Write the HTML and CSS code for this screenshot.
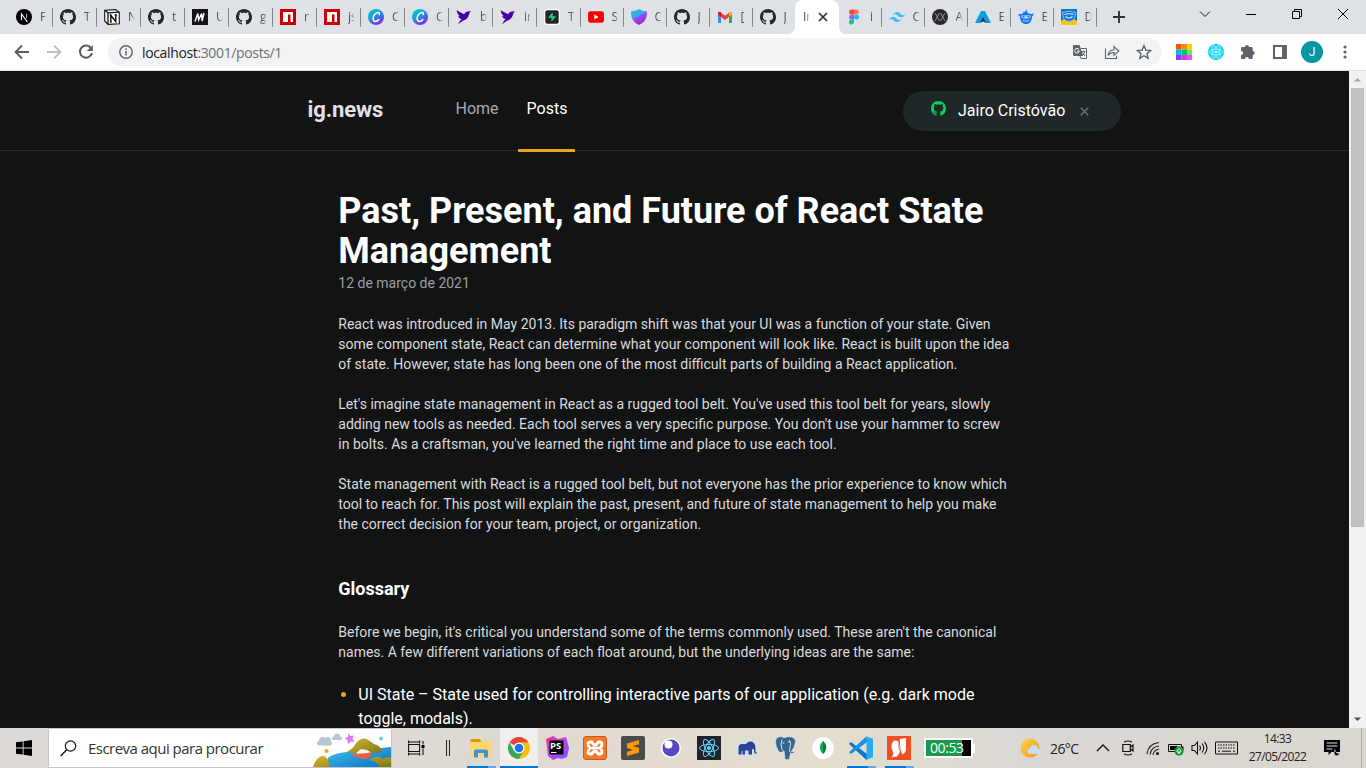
FILE: index.html
```
<!DOCTYPE html>
<html lang="pt-BR">
<head>
<meta charset="utf-8">
<title>ig.news</title>
<link rel="stylesheet" href="styles.css">
</head>
<body>
<svg class="defs" width="0" height="0" aria-hidden="true">
  <defs>
    <linearGradient id="canvaFill" x1="0" y1="0" x2=".6" y2="1"><stop offset="0" stop-color="#00c4cc"/><stop offset=".45" stop-color="#1aa5dc"/><stop offset="1" stop-color="#7d2ae8"/></linearGradient>
    <linearGradient id="shieldFill" x1="0" y1="0" x2=".7" y2="1"><stop offset="0" stop-color="#22e0c4"/><stop offset=".5" stop-color="#8a5cf0"/><stop offset="1" stop-color="#b010d8"/></linearGradient>
    <linearGradient id="stormFill" x1="0" y1="0" x2="1" y2="1"><stop offset="0" stop-color="#ff318c"/><stop offset=".5" stop-color="#b345f1"/><stop offset="1" stop-color="#765af8"/></linearGradient>
    <linearGradient id="seaFill" x1="0" y1="0" x2="1" y2="1"><stop offset="0" stop-color="#43c3e6"/><stop offset="1" stop-color="#0b6fc4"/></linearGradient>
    <linearGradient id="hillFill" x1="0" y1="0" x2="1" y2="1"><stop offset="0" stop-color="#d9b62c"/><stop offset="1" stop-color="#7b7a1c"/></linearGradient>
    <linearGradient id="sunFill" x1="0" y1="0" x2="1" y2="1"><stop offset="0" stop-color="#ffd84a"/><stop offset="1" stop-color="#f78f1e"/></linearGradient>
  </defs>
  <symbol id="github" viewBox="0 0 16 16"><path d="M8 0C3.58 0 0 3.58 0 8c0 3.54 2.29 6.53 5.47 7.59.4.07.55-.17.55-.38 0-.19-.01-.82-.01-1.49-2.01.37-2.53-.49-2.69-.94-.09-.23-.48-.94-.82-1.13-.28-.15-.68-.52-.01-.53.63-.01 1.08.58 1.23.82.72 1.21 1.87.87 2.33.66.07-.52.28-.87.51-1.07-1.78-.2-3.64-.89-3.64-3.95 0-.87.31-1.59.82-2.15-.08-.2-.36-1.02.08-2.12 0 0 .67-.21 2.2.82.64-.18 1.32-.27 2-.27s1.36.09 2 .27c1.53-1.04 2.2-.82 2.2-.82.44 1.1.16 1.92.08 2.12.51.56.82 1.27.82 2.15 0 3.07-1.87 3.75-3.65 3.95.29.25.54.73.54 1.48 0 1.07-.01 1.93-.01 2.2 0 .21.15.46.55.38A8.01 8.01 0 0016 8c0-4.42-3.58-8-8-8z"/></symbol>
  <symbol id="npm" viewBox="0 0 16 16"><path fill="#cb0000" d="M0 0h16v16H0z"/><path fill="#fff" d="M3 3h10v10h-2.500V5.500H8V13H3z"/></symbol>
  <symbol id="canva" viewBox="0 0 16 16"><circle cx="8" cy="8" r="8" fill="url(#canvaFill)"/><path d="M11.300 5.500c.3-1.800-1-2.300-2.100-1.900C6.500 4.600 4.800 7.700 5.100 10c.4 3.300 3.800 3.100 5.700.5" fill="none" stroke="#fff" stroke-width="1.500" stroke-linecap="round"/></symbol>
  <symbol id="bird" viewBox="0 0 16 16"><path fill="#4200a8" d="M.8 1c1.800 2.200 5 2.500 7.400 4.300C8.900 3 11 2 15 2.300c-1.300.8-1.600 2-2 3.300-.8 3.400-2.800 5.300-5.700 6L2 15.200l2.600-4.100 1.500-.8C3.700 9.800 2.400 8.300 2.200 7l1.600.2C2 5.600.7 3.700.8 1z"/></symbol>
</svg>

<div class="tabstrip">
  <div class="tab"><svg class="fav" viewBox="0 0 16 16"><circle cx="8" cy="8" r="8"/><path d="M5.500 11.300V5l6 8" fill="none" stroke="#fff" stroke-width="1.200"/><path d="M10.600 4.700v4.500" stroke="#bbb"/></svg><span>F</span></div>
  <div class="tab"><svg class="fav gh"><use href="#github"/></svg><span>T</span></div>
  <div class="tab"><svg class="fav" viewBox="0 0 16 16"><path fill="#fff" stroke="#111" stroke-width="1.100" d="M.7 1.200l10.800-.6 3.800 2.600v11.600L4 15.400.7 12z"/><path d="M1 1.300l3 2.500v11.300M4 3.800l11-.6" fill="none" stroke="#111" stroke-width="1.300"/><path d="M6.800 12.500v-6l5 6v-6.500M5.800 6.300h2M10.700 6h2.200M5.900 12.700h1.900" fill="none" stroke="#111" stroke-width="1.400"/></svg><span>N</span></div>
  <div class="tab"><svg class="fav gh"><use href="#github"/></svg><span>t</span></div>
  <div class="tab"><svg class="fav" viewBox="0 0 16 16"><path fill="#15141a" d="M0 0h16v16H0z"/><path d="M3 12.500L5.800 4.500 6.600 11l3-6.500.5 7.500 1.900-8" fill="none" stroke="#fff" stroke-width="1.400"/></svg><span>U</span></div>
  <div class="tab"><svg class="fav gh"><use href="#github"/></svg><span>g</span></div>
  <div class="tab"><svg class="fav"><use href="#npm"/></svg><span>r</span></div>
  <div class="tab"><svg class="fav"><use href="#npm"/></svg><span>js</span></div>
  <div class="tab"><svg class="fav"><use href="#canva"/></svg><span>C</span></div>
  <div class="tab"><svg class="fav"><use href="#canva"/></svg><span>C</span></div>
  <div class="tab"><svg class="fav"><use href="#bird"/></svg><span>b</span></div>
  <div class="tab"><svg class="fav"><use href="#bird"/></svg><span>in</span></div>
  <div class="tab"><svg class="fav" viewBox="0 0 16 16"><rect width="16" height="16" rx="3.500" fill="#fff"/><rect x="1.300" y="1.300" width="13.400" height="13.400" rx="2" fill="#25262b"/><path fill="#24c984" d="M8.700 3.300L3.900 8.800h3.500v3.900l4.800-5.500H8.700z"/></svg><span>T</span></div>
  <div class="tab late"><svg class="fav" viewBox="0 0 16 16"><rect y="2.300" width="16" height="11.400" rx="2.600" fill="#f00"/><path fill="#fff" d="M6.300 5.600v4.800L10.600 8z"/></svg><span>S</span></div>
  <div class="tab late"><svg class="fav" viewBox="0 0 16 16"><path fill="url(#shieldFill)" d="M0 2.500Q5 2 8 .200q3 1.800 8 2.300c0 7-2.500 11-8 13.500C2.500 13.500 0 9.500 0 2.500z"/><path fill="#1fbfe6" d="M0 2.500Q5 2 8 .200q3 1.800 8 2.300L1.800 10Q0 7 0 2.500z" opacity=".75"/></svg><span>C</span></div>
  <div class="tab late"><svg class="fav gh"><use href="#github"/></svg><span>J</span></div>
  <div class="tab late"><svg class="fav" viewBox="0 0 16 16"><path fill="#4285f4" d="M1 3.500h3V14H2q-1 0-1-1z"/><path fill="#34a853" d="M12 3.500h3V13q0 1-1 1h-2z"/><path fill="#ea4335" d="M3 3l5 3.800L13 3v4.200L8 11 3 7.200z"/><path fill="#c5221f" d="M1 4q.3-2 3-1v4.800L1 5.500z"/><path fill="#fbbc04" d="M15 4q-.3-2-3-1v4.800l3-2.300z"/></svg><span>[</span></div>
  <div class="tab late nosep"><svg class="fav gh"><use href="#github"/></svg><span>J</span></div>
  <div class="tab active"><span>Ir</span><svg class="close" viewBox="0 0 10 10"><path d="M1 1l8 8M9 1L1 9" stroke="#303236" stroke-width="1.700"/></svg></div>
  <div class="tab figma"><svg class="fav" viewBox="0 0 16 16"><path fill="#f24e1e" d="M8 .5H5.600a2.500 2.500 0 000 5H8z"/><path fill="#ff7262" d="M8 .5h2.400a2.500 2.500 0 010 5H8z"/><path fill="#a259ff" d="M8 5.500H5.600a2.500 2.500 0 000 5H8z"/><circle cx="10.500" cy="8" r="2.500" fill="#1abcfe"/><path fill="#0acf83" d="M5.600 10.500H8V13a2.500 2.500 0 11-2.400-2.500z"/></svg><span>i</span></div>
  <div class="tab late"><svg class="fav" viewBox="0 0 16 16"><path fill="#38bdf8" d="M4 6.500C4.500 4.400 5.900 3.300 8 3.300c3.200 0 3.600 2.400 5.200 2.800 1.100.3 2-.1 2.800-1.200-.5 2.100-1.900 3.200-4 3.200-3.200 0-3.600-2.400-5.200-2.800-1.100-.3-2 .1-2.800 1.200zM0 11.300c.5-2.100 1.900-3.200 4-3.200 3.200 0 3.600 2.400 5.200 2.800 1.100.3 2-.1 2.800-1.200-.5 2.100-1.900 3.200-4 3.200-3.200 0-3.600-2.400-5.200-2.800-1.100-.3-2 .1-2.800 1.200z"/></svg><span>C</span></div>
  <div class="tab late"><svg class="fav" viewBox="0 0 16 16"><circle cx="8" cy="8" r="8" fill="#292929"/><path d="M3 4l4.500 8M7.500 4L3 12M8.500 4l4.500 8M13 4l-4.500 8" stroke="#999" stroke-width=".9"/></svg><span>A</span></div>
  <div class="tab late"><svg class="fav" viewBox="0 0 16 16"><path fill="#0b9fe0" d="M6 2h4l6 12h-5L8 7.500 5 14H0z"/><path fill="#123a58" d="M8 7.500L11.200 14 8 12.500 4.800 14z"/></svg><span>E</span></div>
  <div class="tab late"><svg class="fav" viewBox="0 0 16 16"><path fill="#1a73e8" d="M2.500 5.200l3-1.200-.5-1.500 2 .5L8.500.5 9.500 4l4 1.200L15.500 4 15 7l-1 .5c0 5-2.500 7.500-6 7.500s-6-2.500-6-7.500L.5 6.500l0-1.500z"/><path fill="#a9d4ff" d="M3.500 6.300h9v2.500q-4.500 2-9 0z"/><path stroke="#1a73e8" stroke-width="1.800" d="M5.600 6.800v1.700M10.500 6.800v1.700"/><path d="M5 11.500q3 1.500 6 0" fill="none" stroke="#a9d4ff"/></svg><span>E</span></div>
  <div class="tab late"><svg class="fav" viewBox="0 0 16 16"><path fill="#1273d4" d="M0 0h16v12H0z"/><path fill="#fcc609" d="M0 12l3-2h10l3 2v4H0z"/><path fill="#1273d4" stroke="#86cfff" stroke-width=".9" d="M1.500 3.500Q8 1 14.500 3.500L13.500 9Q12 12.500 8 12.500T2.500 9z"/><path d="M3.500 5.500Q8 4 12.500 5.500M4.500 7.500q3.500 3 7 0" fill="none" stroke="#d6efff" stroke-width="1.200"/></svg><span>D</span></div>
  <svg class="plus" viewBox="0 0 12 12"><path d="M6 0v12M0 6h12" stroke="#303236" stroke-width="1.900"/></svg>
  <div class="winctl">
    <svg viewBox="0 0 12 12"><path d="M1 3.500l5 5 5-5" fill="none" stroke="#111"/></svg>
    <svg viewBox="0 0 12 12"><path d="M1 6.500h10" stroke="#000"/></svg>
    <svg viewBox="0 0 12 12"><path d="M1.500 3.500h7v7h-7zM3.500 3.500v-2h7v7h-2" fill="none" stroke="#000"/></svg>
    <svg viewBox="0 0 12 12"><path d="M1 1l10 10M11 1L1 11" stroke="#000"/></svg>
  </div>
</div>

<div class="toolbar">
  <svg class="nav" viewBox="0 0 16 16"><path d="M15 8H2M8 1.500L1.600 8 8 14.500" fill="none" stroke="#5a5d61" stroke-width="1.900"/></svg>
  <svg class="nav" viewBox="0 0 16 16"><path d="M1 8h13M8 1.500L14.400 8 8 14.500" fill="none" stroke="#bdc0c3" stroke-width="1.900"/></svg>
  <svg class="nav" viewBox="0 0 16 16"><path d="M13.200 4.300A6.100 6.100 0 1014 9" fill="none" stroke="#5a5d61" stroke-width="2"/><path fill="#5a5d61" d="M14.800 1v6H8.800z"/></svg>
  <div class="omnibox">
    <svg class="info" viewBox="0 0 14 14"><circle cx="7" cy="7" r="6.200" fill="none" stroke="#5f6368" stroke-width="1.400"/><path d="M7 6v4.500M7 3.300v1.600" stroke="#5f6368" stroke-width="1.500"/></svg>
    <span class="url"><b>localhost</b>:3001/posts/1</span>
    <svg class="act" viewBox="0 0 16 16"><path fill="#5f6368" d="M1.500 1h6l1.300 3.500L11 12H2.500Q1 12 1 10.500v-8Q1 1 1.500 1z"/><path d="M9 4.500h5.500v10H9L8 12" fill="none" stroke="#5f6368"/><path d="M9.500 7.500h4M11.500 6.500v1M12.700 7.500Q12 10.500 10.500 11.500M10.500 8.500l2.500 3.500" fill="none" stroke="#5f6368" stroke-width=".9"/><path d="M6.800 5.300a2.300 2.300 0 10.500 1.700H5" fill="none" stroke="#fff"/></svg>
    <svg class="act" viewBox="0 0 16 16"><path d="M1.500 4.500v10h11v-3M4 11.500Q4.500 6 10 5.800V2.500L14.800 7 10 11.300V8.500Q6 8.400 4 11.500z" fill="none" stroke="#5f6368" stroke-width="1.100"/></svg>
    <svg class="act" viewBox="0 0 16 16"><path d="M8 1.800l1.900 4.300 4.700.4-3.600 3.100 1.100 4.600L8 11.700l-4.100 2.500L5 9.600 1.400 6.500l4.700-.4z" fill="none" stroke="#5f6368" stroke-width="1.400"/></svg>
  </div>
  <svg class="ext" viewBox="0 0 16 16"><path fill="#ff5200" d="M0 0h5.500v5.500H0z"/><path fill="#ff8c00" d="M5.500 0H11v5.500H5.500z"/><path fill="#fc0" d="M11 0h5v5.500h-5z"/><path fill="#00b7f4" d="M0 5.500h5.500V11H0z"/><path fill="#00c257" d="M5.500 5.500H11V11H5.500z"/><path fill="#7be04c" d="M11 5.500h5V11h-5z"/><path fill="#8b3dff" d="M0 11h5.500v5H0z"/><path fill="#c43dff" d="M5.500 11H11v5H5.500z"/><path fill="#ff42f2" d="M11 11h5v5h-5z"/></svg>
  <svg class="ext" viewBox="0 0 16 16"><circle cx="8" cy="8" r="8" fill="#12d3f3"/><g fill="none" stroke="#b2f3ff" stroke-width=".8"><ellipse cx="8" cy="8" rx="6.500" ry="2.800"/><ellipse cx="8" cy="8" rx="6.500" ry="2.800" transform="rotate(60 8 8)"/><ellipse cx="8" cy="8" rx="6.500" ry="2.800" transform="rotate(120 8 8)"/></g><circle cx="8" cy="8" r="1.300" fill="#fff"/></svg>
  <svg class="ext" viewBox="0 0 16 16"><path fill="#5f6368" d="M1 4.200q0-1.200 1.200-1.200H5a2 2 0 014 0h2.500q1.200 0 1.200 1.200V7a2 2 0 010 4v3q0 1-1.200 1H9a2.100 2.100 0 00-4.200 0H2.200Q1 15 1 14v-2.800a2.100 2.100 0 000-4.200z"/></svg>
  <svg class="ext" viewBox="0 0 16 16"><path fill="#5f6368" fill-rule="evenodd" d="M1 1h14v14H1zM3 3v10h7V3z"/></svg>
  <div class="avatar">J</div>
  <svg class="dots" viewBox="0 0 4 14"><g fill="#5f6368"><circle cx="2" cy="2" r="1.600"/><circle cx="2" cy="7" r="1.600"/><circle cx="2" cy="12" r="1.600"/></g></svg>
</div>

<div class="viewport">
  <div class="page">
    <header class="site-header">
      <strong class="logo">ig.news</strong>
      <nav class="site-nav"><a>Home</a><a class="current">Posts</a></nav>
      <button class="user"><svg class="user-icon"><use href="#github"/></svg><span>Jairo Cristóvão</span><svg class="user-x" viewBox="0 0 10 10"><path d="M.8.8l8.400 8.400M9.200.8L.8 9.200" stroke="#737380" stroke-width="1.500"/></svg></button>
    </header>
    <article class="post">
      <h1>Past, Present, and Future of React State<br>Management</h1>
      <time>12 de março de 2021</time>
      <p>React was introduced in May 2013. Its paradigm shift was that your UI was a function of your state. Given<br>some component state, React can determine what your component will look like. React is built upon the idea<br>of state. However, state has long been one of the most difficult parts of building a React application.</p>
      <p>Let's imagine state management in React as a rugged tool belt. You've used this tool belt for years, slowly<br>adding new tools as needed. Each tool serves a very specific purpose. You don't use your hammer to screw<br>in bolts. As a craftsman, you've learned the right time and place to use each tool.</p>
      <p>State management with React is a rugged tool belt, but not everyone has the prior experience to know which<br>tool to reach for. This post will explain the past, present, and future of state management to help you make<br>the correct decision for your team, project, or organization.</p>
      <h3>Glossary</h3>
      <p>Before we begin, it's critical you understand some of the terms commonly used. These aren't the canonical<br>names. A few different variations of each float around, but the underlying ideas are the same:</p>
      <ul><li>UI State – State used for controlling interactive parts of our application (e.g. dark mode<br>toggle, modals).</li></ul>
    </article>
  </div>
  <div class="scrollbar"><svg viewBox="0 0 17 17"><path fill="#a3a3a3" d="M5 10.500h7L8.500 7z"/></svg><div class="thumb"></div><svg viewBox="0 0 17 17"><path fill="#505050" d="M5 6.500h7L8.500 10z"/></svg></div>
</div>

<div class="taskbar">
  <div class="start"><svg viewBox="0 0 16 16"><path d="M0 2.300l6.700-.9v6.200H0zM7.600 1.200L16 0v7.600H7.600zM0 8.400h6.700v6.200L0 13.700zM7.600 8.400H16V16l-8.400-1.200z"/></svg></div>
  <div class="search">
    <svg class="glass" viewBox="0 0 17 17"><circle cx="10.500" cy="6" r="5.200" fill="none" stroke="#111" stroke-width="1.200"/><path d="M6.700 9.700L.7 16" stroke="#111" stroke-width="1.300"/></svg>
    <span>Escreva aqui para procurar</span>
    <svg class="scene" viewBox="0 0 78 38">
      <g fill="#b5c6d4"><circle cx="10" cy="12" r="4"/><circle cx="14.500" cy="11.500" r="3.500"/><rect x="4" y="12" width="15" height="4.500" rx="2.250"/><circle cx="24" cy="7.500" r="3"/><rect x="19" y="7.500" width="10" height="3.500" rx="1.700"/></g>
      <path fill="#e477f5" d="M35.500 4l2 3 3.500-.5-1.500 3.300 2 3.200-3.500-.5-3 2.500-.5-4-3-1.500 3.500-1.700z"/>
      <circle cx="68" cy="9.500" r="2" fill="#69cfe8"/><circle cx="13.500" cy="22" r="2" fill="#f6a81c"/>
      <path fill="url(#seaFill)" d="M14 38q-1-8 2-10 6-4 18-5 10-3 25-3l19-2v20z"/>
      <path fill="url(#hillFill)" d="M34 23q7-4 9-9 7-8 14-2 3 3 7 4 5 3 5 7-12 2-35 0z"/>
      <path fill="url(#hillFill)" d="M0 38Q4 26 11 27q4 1 6 11zM56 31q8-6 14-1 5-3 8-1v9H66q-2-6-10-7z"/>
      <path fill="#f2f4f5" d="M43 24l5-4 6 1 5 3-14 2z"/><path fill="#ef6042" d="M38 24q9 2 21-1-2 6-6 7l-7-1q-5-1-8-5z"/>
    </svg>
  </div>
  <div class="apps">
    <div class="app view"><svg viewBox="0 0 18 18"><path d="M.6 4.500V1.500M.6 5.500h11v7H.6zM.6 16.500v-3M11.600 1.500v3M11.600 13.500v3M.6 3h11M.6 15h11M15 2v3.500M15 9.500V16" fill="none" stroke="#111" stroke-width="1.100"/><path d="M13.500 6h3v3h-3z"/></svg></div>
    <div class="bars"></div>
    <div class="app run"><svg viewBox="0 0 24 24"><path fill="#d79a08" d="M1.500 3h9l2 2.500H22V9H1.500z"/><path fill="#ffd76a" d="M1.500 6h9.500l2-1h9.500v15.500h-21z"/><path fill="#3a95d6" d="M5 21.500v-6q0-2 2-2h10q2 0 2 2v6h-4v-4.500H9v4.500z"/></svg></div>
    <div class="app open"><svg viewBox="0 0 24 24"><path fill="#ea4335" d="M12 12L2.500 6.500A11 11 0 0121.500 6.500L12 7z"/><path fill="#fbbc04" d="M12 6.600h9.600A11 11 0 0112 23z"/><path fill="#34a853" d="M2.400 6.500A11 11 0 0011.800 23L16.700 14.700 7.300 14.900z"/><circle cx="12" cy="12" r="5.500" fill="#fff"/><circle cx="12" cy="12" r="4.300" fill="#1a73e8"/></svg></div>
    <div class="app"><svg viewBox="0 0 24 24"><path fill="url(#stormFill)" d="M1 3l7-3 5 3 8-2 3 11-2 9-5 2-4-1-5 2-5-4z"/><path d="M4.500 4.500h14v14h-14z"/><path stroke="#fff" d="M6 16.500h5.500"/><text x="5" y="13.200" class="ps">PS</text></svg></div>
    <div class="app"><svg viewBox="0 0 24 24"><rect x=".5" y=".5" width="23" height="23" rx="2.500" fill="#f47b29" stroke="#c85b16"/><path d="M7.500 6h1.300q1.200 2.800 3.200 2.800T15.200 6h1.300q2.500 0 2.500 2.200 0 1.800-2 3.800 2 2 2 3.800 0 2.200-2.500 2.200h-1.300q-1.200-2.800-3.200-2.800T8.800 18H7.500Q5 18 5 15.800 5 14 7 12 5 10 5 8.200 5 6 7.500 6zM8.500 12h7" fill="none" stroke="#fff" stroke-width="2.900" stroke-linejoin="round"/></svg></div>
    <div class="app"><svg viewBox="0 0 24 24"><rect width="24" height="24" rx="2" fill="#4b4b4b"/><path fill="#ff9800" d="M6 7.500L18 4v4.300L11.500 10l6.500 2v4.500L6 20v-4.300l6-1.800-6-2z"/></svg></div>
    <div class="app"><svg viewBox="0 0 24 24"><circle cx="12" cy="12" r="10" fill="#fff"/><circle cx="12" cy="12" r="8.500" fill="#5849be"/><circle cx="9.500" cy="8.500" r="4" fill="#fff"/></svg></div>
    <div class="app"><svg viewBox="0 0 24 24"><path fill="#20232a" d="M0 0h24v24H0z"/><g fill="none" stroke="#61dafb" stroke-width="1"><ellipse cx="12" cy="12" rx="9.500" ry="3.600"/><ellipse cx="12" cy="12" rx="9.500" ry="3.600" transform="rotate(60 12 12)"/><ellipse cx="12" cy="12" rx="9.500" ry="3.600" transform="rotate(120 12 12)"/></g><circle cx="12" cy="12" r="2" fill="#61dafb"/></svg></div>
    <div class="app"><svg viewBox="0 0 24 24"><circle cx="12" cy="12" r="10.500" fill="#dedede"/><path fill="#28439b" d="M3.500 18.500V12q0-4 3.500-4h4q1.500-3 5-2.500 4 .5 4.500 6.500v4q0 1 1 0l.5 1q-3 2-3-2v-2l-2 .5v5h-3.500v-4H10v4H7.500v-4l-1 1v3z"/></svg></div>
    <div class="app"><svg viewBox="0 0 24 24"><path fill="#336791" stroke="#dfe6ea" stroke-width=".7" d="M5 1q4-1 6 .7Q15 0 19 1q4 1.500 3.500 5-1 6-4 9.500l4 .2q-1 2-5 1.800l-1 5q-1 1.700-4.500 1l-.8-8-2 .5Q6 18 3.500 11 1 3 5 1z"/><path d="M9 3.500q-2 4 0 10l2 2M16.500 4q2 4 .5 7l-.5 4 1 1.500M9.500 7h2M15 6h2" fill="none" stroke="#fff" stroke-width=".8"/></svg></div>
    <div class="app"><svg viewBox="0 0 24 24"><circle cx="12" cy="12" r="10.800" fill="#fff"/><path fill="#13aa52" d="M12 5q4 4 3 8-.7 3-3 5-2.300-2-3-5-1-4 3-8z"/><path fill="#0c7c3b" d="M12 5q4 4 3 8-.7 3-3 5z"/></svg></div>
    <div class="app run"><svg viewBox="0 0 24 24"><path fill="#0879c9" d="M0 7.700L2 6l16 12v5.500l-.8.200L1 9z"/><path fill="#1591df" d="M0 16.300L17.500.3 18 6 2 18z"/><path fill="#2aaaf2" d="M17.500.2L24 3v18l-6.500 3z"/></svg></div>
    <div class="app run"><svg viewBox="0 0 24 24"><path fill="#f04e23" d="M0 0h24v24H0z"/><path fill="#fff" d="M12.500 3l6.500-1v11q0 4-4 5.500l-1.500-6zM7 4.500l4.500.5 2 8.500q-.5 4-3.500 7l-5.500 1q3-4 1-6.500-2.500-7 1.500-10.500z"/><path d="M12 3.500v8l2.500 6.500" fill="none" stroke="#f04e23" stroke-width="1"/></svg></div>
  </div>
  <div class="timer"><span>00:53</span></div>
  <svg class="weather" viewBox="0 0 22 22"><circle cx="10" cy="11" r="9.500" fill="url(#sunFill)"/><g fill="#bfe2f7"><circle cx="14" cy="12" r="4"/><rect x="7.500" y="11.500" width="13" height="5.500" rx="2.750"/></g></svg>
  <span class="temp">26°C</span>
  <div class="tray">
    <svg class="caret" viewBox="0 0 14 16"><path d="M1 11l6-6 6 6" fill="none" stroke="#111" stroke-width="1.300"/></svg>
    <svg class="cam" viewBox="0 0 12 16"><path d="M.8 4.500h7.500v7H.8zM8.500 7L11 5v6L8.500 9M2 2q4-2 8 0M2 14q4 2 8 0" fill="none" stroke="#111" stroke-width="1.200"/></svg>
    <svg class="wifi" viewBox="0 0 14 16"><path d="M1 14Q2 4 13 2.500M4 14.500Q5 7 13 6M7 14.800Q8 10 13 9" fill="none" stroke="#222" stroke-width="1.200"/><circle cx="11.500" cy="13.500" r="1.500"/></svg>
    <svg class="batt" viewBox="0 0 16 16"><path d="M.5 4.500h13v7H.5z" fill="none" stroke="#111"/><path d="M2 6h7v4H2zM14 6.500h1.500V10H14z"/><circle cx="11" cy="11" r="4.700" fill="#159b32"/><path d="M11 14v-3m0-2.500q4 3 0 4.500-4-1.500 0-4.500" fill="none" stroke="#fff"/></svg>
    <svg class="vol" viewBox="0 0 17 16"><path d="M1 5.500h2.500L6.500 2v12L3.500 10.500H1zM8.500 5.500q2 2.500 0 5M11 3.500q3.500 4.500 0 9M13.500 1.800q5 6.200 0 12.400" fill="none" stroke="#111" stroke-width="1.100"/></svg>
    <svg class="kbd" viewBox="0 0 23 16"><path d="M.5 2h22v12H.5z" fill="none" stroke="#111"/><path d="M3 5h17.500M3 8h17.500" stroke="#111" stroke-width="1.200" stroke-dasharray="1.500 1"/><path d="M3 11.200h2M7 11.200h9M18 11.200h2" stroke="#111"/></svg>
  </div>
  <div class="clock"><span>14:33</span><span>27/05/2022</span></div>
  <svg class="note" viewBox="0 0 17 18"><path d="M0 1h16v12H7.500L4.500 16v-3H0z"/><path d="M2.500 4h11M2.500 7h11M2.500 10h6" stroke="#ddd" stroke-width="1.100"/><path d="M11 16.500q-2-3 0-6 0 4 5 4-2 3-5 2z" stroke="#ddd" stroke-width=".6"/></svg>
  <div class="peek"></div>
</div>
</body>
</html>
```

FILE: styles.css
```
* { box-sizing: border-box; }
body { margin: 0; width: 1366px; height: 768px; overflow: hidden; display: flex; flex-direction: column; font-family: "Open Sans", sans-serif; }
svg { display: block; flex: none; }
.defs { position: absolute; }

.tabstrip { height: 34px; flex: none; background: #dee1e6; display: flex; padding-left: 8px; }
.tab { width: 44px; height: 34px; flex: none; display: flex; align-items: center; padding-left: 8px; position: relative; font-size: 12px; color: #50545a; }
.tab::after { content: ""; position: absolute; right: -1px; top: 8px; width: 1px; height: 19px; background: #83868b; }
.tab span { margin-left: 8px; width: 10px; white-space: nowrap; line-height: 18px; -webkit-mask-image: linear-gradient(90deg, #000 3px, transparent 7px); mask-image: linear-gradient(90deg, #000 3px, transparent 7px); }
.tab.late { width: 43px; padding-left: 7.500px; }
.tab.figma { width: 42px; padding-left: 7px; }
.tab.nosep::after, .tab.active::after { display: none; }
.fav { width: 16px; height: 16px; }
.gh { fill: #24292f; }
.tab.active { width: 44px; background: #fff; border-radius: 8px 8px 0 0; padding-left: 8px; }
.tab.active::before { content: ""; position: absolute; left: -8px; right: -8px; bottom: 0; height: 8px; background: radial-gradient(circle at 0 0, transparent 8px, #fff 8.500px) left / 8px 8px no-repeat, radial-gradient(circle at 100% 0, transparent 8px, #fff 8.500px) right / 8px 8px no-repeat; }
.tab.active span { margin: 0; width: 9px; color: #45494d; }
.close { width: 10px; height: 10px; margin-left: 6px; }
.plus { width: 12px; height: 12px; margin: 11px 0 0 17px; }
.winctl { margin-left: auto; display: flex; gap: 34px; padding: 8px 17px 0 0; }
.winctl svg { width: 12px; height: 12px; }

.toolbar { height: 37px; flex: none; background: #fff; border-bottom: 1px solid #dcdee0; display: flex; align-items: center; padding-left: 14px; }
.nav { width: 16px; height: 16px; margin-right: 16px; }
.nav:nth-of-type(3) { margin-right: 14px; }
.omnibox { width: 1054px; height: 28px; border-radius: 14px; background: #f1f3f4; display: flex; align-items: center; padding: 0 10px 0 11px; }
.info { width: 14px; height: 14px; }
.url { margin-left: 9px; font-size: 14px; letter-spacing: -.36px; color: #6c7074; margin-right: auto; }
.url b { font-weight: 400; color: #202124; }
.act { width: 16px; height: 16px; margin-left: 16px; }
.ext { width: 16px; height: 16px; margin-left: 16px; }
.omnibox + .ext { margin-left: 14px; }
.avatar { width: 22px; height: 22px; border-radius: 50%; margin-left: 13px; background: #0097a7; color: #fff; font: 12px Roboto, sans-serif; display: flex; align-items: center; justify-content: center; }
.dots { width: 4px; height: 14px; margin-left: 19.500px; }

.viewport { height: 657px; flex: none; display: flex; }
.page { width: 1349px; background: #121414; font-family: Roboto, sans-serif; overflow: hidden; }
.scrollbar { width: 17px; background: #f1f1f1; display: flex; flex-direction: column; align-items: center; }
.scrollbar svg { width: 17px; height: 17px; }
.thumb { width: 13px; height: 439px; background: #c1c1c1; margin-bottom: auto; }

.site-header { height: 80px; border-bottom: 1px solid #2a2d2e; display: flex; align-items: flex-start; padding: 20px 228px 0 307.500px; }
.logo { font-size: 22px; line-height: 26px; letter-spacing: -.1px; margin-top: 6px; width: 148px; color: #e1e1e6; }
.site-nav { display: flex; gap: 28px; font-size: 16px; line-height: 20px; color: #a8a8b3; margin-top: 8px; }
.current { color: #fff; position: relative; }
.current::after { content: ""; position: absolute; left: -8.500px; width: 57px; top: 50px; height: 3px; background: #eba417; border-radius: 1px 1px 0 0; }
.user { margin-left: auto; width: 218px; height: 40px; border: 0; border-radius: 20px; background: #1f2729; color: #fff; font: 400 16px/20px Roboto, sans-serif; display: flex; align-items: center; padding: 0 0 0 28px; }
.user-icon { width: 15px; height: 15px; fill: #04d361; margin: 0 12px 5px 0; }
.user-x { width: 9px; height: 9px; margin-left: 14.500px; }

.post { width: 672px; margin: 40px 0 0 338.300px; color: #dadade; white-space: nowrap; }
.post h1 { margin: 0; font-size: 36px; line-height: 40px; color: #fff; }
.post time { display: block; font-size: 14px; line-height: 20px; margin: 2px 0 21px; color: #9b9ea5; }
.post p { margin: 0 0 20px; font-size: 14px; line-height: 20px; }
.post h3 { margin: 42px 0 20px; font-size: 18px; line-height: 26px; color: #fff; }
.post ul { margin: 21px 0 0; padding-left: 20px; font-size: 16px; line-height: 24px; color: #fff; list-style: none; }
.post li { position: relative; }
.post li::before { content: ""; position: absolute; left: -17px; top: 9px; width: 5px; height: 5px; border-radius: 50%; background: #eba417; }

.taskbar { height: 40px; flex: none; display: flex; align-items: center; background: linear-gradient(90deg, #ded9d5 0, #dfd9d3 35%, #e4ddcf 62%, #dad8d4 75%, #dad6cf 100%); color: #222; }
.start { width: 48px; flex: none; padding-left: 16px; }
.start svg { width: 16px; height: 16px; }
.search { width: 344px; flex: none; height: 40px; background: #fff; border: 1px solid #c6c6c6; display: flex; align-items: center; padding-left: 11px; font-size: 15px; color: #333; }
.search span { letter-spacing: -.52px; margin: 0 auto 0 11px; white-space: nowrap; }
.glass { width: 17px; height: 17px; }
.scene { width: 78px; height: 38px; }
.apps { display: flex; }
.app { width: 38px; height: 40px; padding: 8px 7px; position: relative; }
.app svg { width: 24px; height: 24px; }
.app.view { width: 50px; padding: 11px 0 0 16px; }
.app.view svg { width: 18px; height: 18px; }
.bars { width: 4px; height: 16px; border: solid #222; border-width: 0 1px; margin: 12px 12px 0 4px; }
.app.open { background: #f1efee; border-bottom: 2px solid #0078d7; }
.app.run::after { content: ""; position: absolute; left: 5px; bottom: 0; width: 29px; height: 2px; background: linear-gradient(90deg, #0078d7 21px, #64a9e2 21px); }
.ps { font: 700 9.500px "Open Sans", sans-serif; fill: #fff; }
.timer { width: 49px; height: 20px; margin-left: 6px; border: 2px solid #fff; background: linear-gradient(90deg, #179b4b 36px, #000 36px); color: #fff; font-size: 14px; line-height: 16px; position: relative; padding-left: 4px; letter-spacing: -.4px; }
.timer::after { content: ""; position: absolute; right: -4px; top: 4px; width: 2px; height: 9px; background: #fff; }
.weather { width: 22px; height: 22px; margin-left: 47px; }
.temp { font-size: 14px; width: 34px; margin-left: 8px; letter-spacing: -.6px; }
.tray { display: flex; align-items: center; margin-left: 12px; }
.tray svg { height: 16px; }
.caret { width: 14px; }
.cam { width: 12px; margin-left: 12px; }
.wifi { width: 14px; margin-left: 12px; }
.batt { width: 16px; margin-left: 8px; }
.vol { width: 17px; margin-left: 7px; }
.kbd { width: 23px; margin-left: 7px; }
.clock { width: 60px; margin-left: 9.500px; display: flex; flex-direction: column; align-items: center; font-size: 12px; line-height: 18px; letter-spacing: -.6px; }
.note { width: 17px; height: 18px; margin-left: 16.500px; }
.peek { width: 1px; height: 40px; margin-left: auto; margin-right: 4px; background: #aaa; }
```
